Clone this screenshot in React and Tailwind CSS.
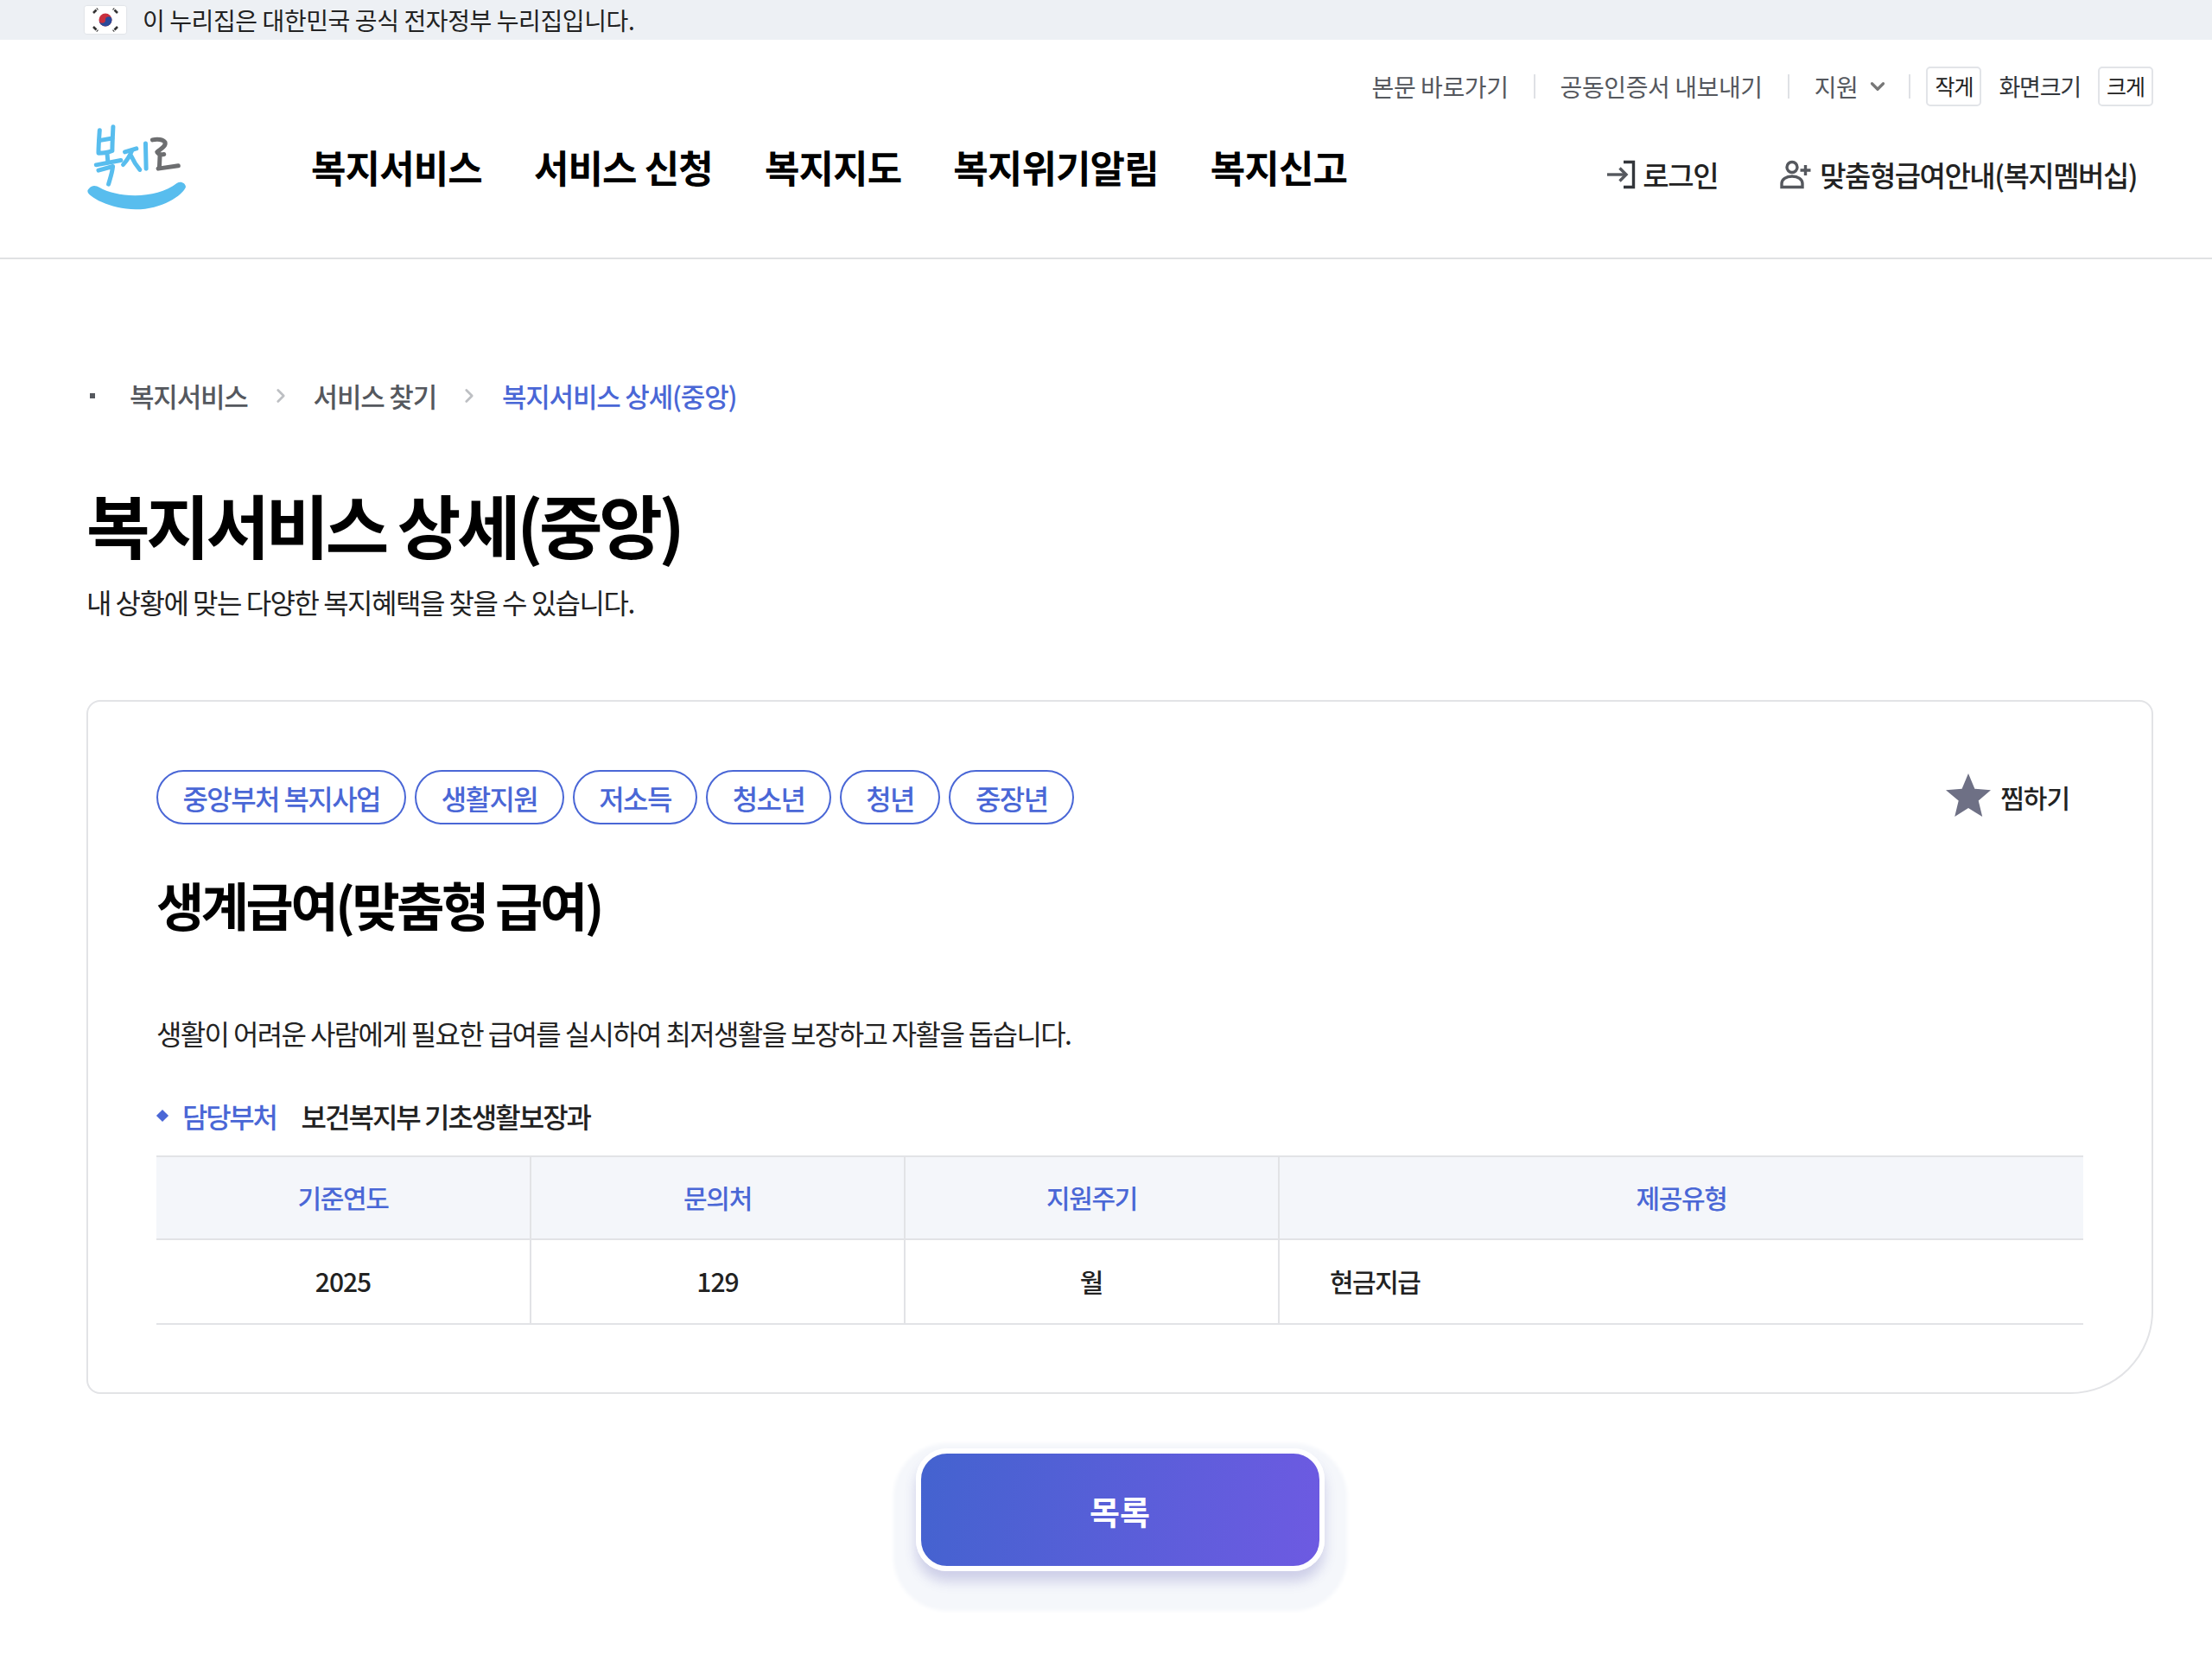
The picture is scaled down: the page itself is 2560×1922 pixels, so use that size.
import { ChevronDown, ChevronRight } from 'lucide-react'

const tags = ['중앙부처 복지사업', '생활지원', '저소득', '청소년', '청년', '중장년']
const navItems = ['복지서비스', '서비스 신청', '복지지도', '복지위기알림', '복지신고']
const columns = ['기준연도', '문의처', '지원주기', '제공유형']

function Flag() {
  return (
    <svg viewBox="0 0 48 32" className="h-[32px] w-[48px] shrink-0 rounded-[2px] bg-white shadow-[0_0_2px_rgba(0,0,0,0.15)]" role="img" aria-label="태극기">
      <circle cx="24" cy="16" r="7.5" fill="#c9303e" />
      <path d="M16.5 16a3.75 3.75 0 0 0 7.5 0 3.75 3.75 0 0 1 7.500 0 7.500 7.500 0 0 1-15 0z" fill="#2a4a9a" />
      <g stroke="#333" strokeWidth="2.6" strokeDasharray="5 1">
        <path d="M10 8l5 -5" />
        <path d="M38 8l-5 -5" />
        <path d="M10 24l5 5" />
        <path d="M38 24l-5 5" />
      </g>
    </svg>
  )
}

function Logo() {
  return (
    <svg viewBox="55 60 355 310" className="-mt-[3px] h-[103px] w-[118px] shrink-0" role="img" aria-label="복지로">
      <g fill="none" stroke="#58bdee" strokeWidth="15" strokeLinecap="round" strokeLinejoin="round">
        <path d="M104 92C102 120 100 150 100 172C116 172 134 170 148 164C148 135 150 105 151 80" />
        <path d="M102 128L148 120" />
        <path d="M92 213L178 197" />
        <path d="M130 172L133 204" />
        <path d="M100 232L150 218C148 240 140 262 135 280" />
        <path d="M192 168L232 156" />
        <path d="M216 164C210 180 198 198 186 212" />
        <path d="M214 182C222 200 232 216 244 230" />
        <path d="M264 138L266 226" />
      </g>
      <g fill="none" stroke="#6d6e70" strokeWidth="15" strokeLinecap="round" strokeLinejoin="round">
        <path d="M288 126C305 122 325 124 332 134C336 148 318 156 304 168C310 176 318 178 328 176" />
        <path d="M308 226L378 216" />
        <path d="M314 178L312 224" />
      </g>
      <path d="M68 294C78 282 92 284 104 292C160 326 300 336 374 276C386 268 404 276 404 290C394 318 320 368 230 368C140 368 60 322 62 304C62 300 64 298 68 294Z" fill="#58bdee" />
    </svg>
  )
}

function LoginIcon() {
  return (
    <svg viewBox="0 0 34 34" className="h-[34px] w-[34px] shrink-0" fill="none" stroke="#55585e" strokeWidth="3.4" aria-hidden="true">
      <path d="M20 2.500h11.500v29H20" stroke="#33363b" />
      <path d="M1 17h22" />
      <path d="M15.500 9.500L23 17l-7.500 7.500" />
    </svg>
  )
}

function MemberIcon() {
  return (
    <svg viewBox="0 0 36 34" className="h-[34px] w-[36px] shrink-0" fill="none" stroke="#55585e" strokeWidth="3.4" aria-hidden="true">
      <circle cx="14" cy="8.500" r="6" />
      <path d="M2 31.500v-4c0-5 5-8.500 12-8.500s12 3.500 12 8.500v4z" />
      <path d="M29.500 6v12M23.500 12h12" />
    </svg>
  )
}

function Separator() {
  return <span className="mx-[29px] h-[28px] w-[2px] bg-[#dfe1e5]" />
}

function SizeButton({ children }) {
  return (
    <button className="flex h-[46px] w-[64px] items-center justify-center rounded-[5px] border-2 border-[#e2e4e8] text-[25px] tracking-[-1px] text-[#222]">
      {children}
    </button>
  )
}

function Header() {
  return (
    <header className="h-[254px] border-b-2 border-[#e0e1e3] bg-white pt-[31px]">
      <div className="flex h-[46px] items-center justify-end pr-[68px] text-[28px] tracking-[-0.4px] text-[#55585e]">
        <a>본문 바로가기</a>
        <Separator />
        <a>공동인증서 내보내기</a>
        <Separator />
        <a className="flex items-center gap-[10px]">
          지원
          <ChevronDown className="h-[26px] w-[26px] text-[#777]" strokeWidth={3} />
        </a>
        <span className="ml-[23px] mr-[18px] h-[28px] w-[2px] bg-[#dfe1e5]" />
        <SizeButton>작게</SizeButton>
        <span className="mx-[20px] text-[27px] tracking-[-1.200px] text-[#33363b]">화면크기</span>
        <SizeButton>크게</SizeButton>
      </div>
      <div className="mt-[20px] flex items-start pl-[99px] pr-[87px]">
        <Logo />
        <nav className="ml-[143px] mt-[18px] flex gap-[60px] text-[44px] leading-[64px] font-bold tracking-[-0.900px] text-black">
          {navItems.map((item) => (
            <a key={item}>{item}</a>
          ))}
        </nav>
        <div className="ml-auto mt-[34px] flex items-center gap-[72px] text-[33px] leading-[50px] font-medium tracking-[-1.400px] text-[#222]">
          <a className="flex items-center gap-[8px]">
            <LoginIcon />
            로그인
          </a>
          <a className="flex items-center gap-[10px] tracking-[-1.500px]">
            <MemberIcon />
            맞춤형급여안내(복지멤버십)
          </a>
        </div>
      </div>
    </header>
  )
}

function Breadcrumb() {
  return (
    <div className="flex h-[48px] items-center text-[31px] font-medium tracking-[-1.200px] text-[#55585e]">
      <span className="ml-[4px] mr-[40px] h-[6px] w-[6px] bg-[#55585e]" />
      <span>복지서비스</span>
      <ChevronRight className="mx-[25px] h-[26px] w-[26px] text-[#bdbfc3]" strokeWidth={2.500} />
      <span>서비스 찾기</span>
      <ChevronRight className="mx-[25px] h-[26px] w-[26px] text-[#bdbfc3]" strokeWidth={2.500} />
      <span className="text-[#4a67d6]">복지서비스 상세(중앙)</span>
    </div>
  )
}

function Star() {
  return (
    <svg viewBox="0 0 52 50" className="-mt-[5px] h-[50px] w-[52px]" aria-hidden="true">
      <path d="M26 0l7.400 17.800 18.600 1.400-14.300 12.200 4.500 18.600L26 40 10.200 50l4.500-18.600L0 19.200l18.600-1.400z" fill="#6e7085" />
    </svg>
  )
}

function Card() {
  return (
    <section className="mt-[90px] h-[803px] rounded-[16px] rounded-br-[96px] border-2 border-[#e2e3e6] px-[79px] pt-[79px]">
      <div className="flex items-center justify-between">
        <div className="flex gap-[10px]">
          {tags.map((tag) => (
            <span key={tag} className="flex h-[63px] items-center rounded-full border-2 border-[#4a67d6] px-[28.5px] text-[32px] font-medium tracking-[-1.600px] text-[#4a67d6]">
              {tag}
            </span>
          ))}
        </div>
        <button className="flex items-center gap-[11px] pr-[16px] text-[30px] font-medium tracking-[-1px] text-[#222]">
          <Star />
          찜하기
        </button>
      </div>
      <h2 className="mt-[48px] text-[60px] leading-[88px] font-bold tracking-[-3.400px] text-black">생계급여(맞춤형 급여)</h2>
      <p className="mt-[81px] text-[32px] leading-[48px] tracking-[-1.630px] text-[#222]">
        생활이 어려운 사람에게 필요한 급여를 실시하여 최저생활을 보장하고 자활을 돕습니다.
      </p>
      <div className="mt-[48px] flex h-[48px] items-center text-[32px] font-medium tracking-[-2px]">
        <span className="ml-[2px] mr-[18px] h-[10px] w-[10px] rotate-45 bg-[#4a67d6]" />
        <span className="mr-[29px] tracking-[-2.300px] text-[#4a67d6]">담당부처</span>
        <span className="text-[#222]">보건복지부 기초생활보장과</span>
      </div>
      <table className="mt-[22px] w-full table-fixed border-collapse border-y-2 border-[#e2e3e6] text-[30px] font-medium">
        <colgroup>
          <col className="w-[433px]" />
          <col className="w-[433px]" />
          <col className="w-[433px]" />
          <col />
        </colgroup>
        <thead>
          <tr className="h-[96px] bg-[#f4f6fa] text-[#4a67d6]">
            {columns.map((col, i) => (
              <th key={col} className={`pb-[2px] font-medium tracking-[-1.300px] ${i < 3 ? 'border-r-2 border-[#e2e3e6]' : ''}`}>
                {col}
              </th>
            ))}
          </tr>
        </thead>
        <tbody>
          <tr className="h-[98px] border-t-2 border-[#e2e3e6] text-[#222]">
            <td className="border-r-2 border-[#e2e3e6] pb-[2px] text-center tracking-[-1px]">2025</td>
            <td className="border-r-2 border-[#e2e3e6] pb-[2px] text-center tracking-[-1px]">129</td>
            <td className="border-r-2 border-[#e2e3e6] pb-[2px] text-center">월</td>
            <td className="pb-[2px] pl-[58px] tracking-[-1.500px]">현금지급</td>
          </tr>
        </tbody>
      </table>
    </section>
  )
}

export default function App() {
  return (
    <div className="min-h-[1922px] bg-white font-['Noto_Sans_CJK_KR','Noto_Sans',sans-serif]">
      <div className="flex h-[46px] items-center gap-[19px] bg-[#edf0f4] pl-[98px] text-[28px] tracking-[-0.4px] text-[#222]">
        <Flag />
        <span>이 누리집은 대한민국 공식 전자정부 누리집입니다.</span>
      </div>
      <Header />
      <main className="pl-[100px] pr-[68px] pt-[134px]">
        <Breadcrumb />
        <h1 className="mt-[68px] text-[80px] leading-[110px] font-bold tracking-[-4.400px] text-black">복지서비스 상세(중앙)</h1>
        <p className="mt-[12px] text-[32px] leading-[48px] tracking-[-1.500px] text-[#222]">내 상황에 맞는 다양한 복지혜택을 찾을 수 있습니다.</p>
        <Card />
        <div className="mt-[63px] flex justify-center">
          <button className="flex h-[142px] w-[473px] items-center justify-center rounded-[36px] border-[6px] border-white bg-[linear-gradient(100deg,#4363cf,#6e5ae2)] bg-origin-border text-[38px] font-bold text-white shadow-[0_12px_14px_rgba(70,70,170,0.22),0_20px_4px_26px_#f5f7fb]">
            목록
          </button>
        </div>
      </main>
    </div>
  )
}
